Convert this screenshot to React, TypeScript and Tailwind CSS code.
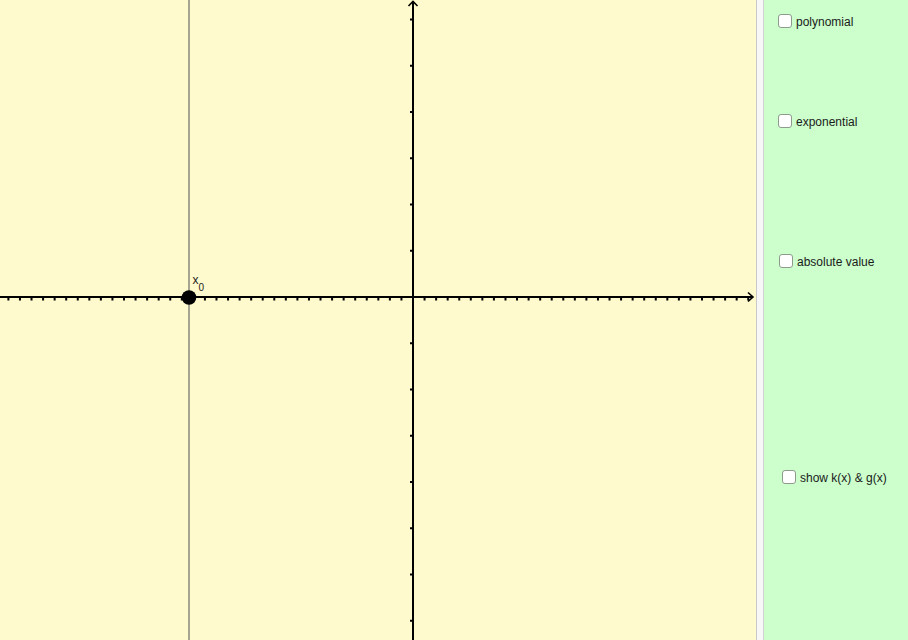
import React from 'react'

const ORIGIN_X = 413
const ORIGIN_Y = 297
const STEP_X = 11.56
const STEP_Y = 46.25

function Graph() {
  const xTicks: number[] = []
  for (let k = -35; k <= 29; k++) if (k !== 0) xTicks.push(ORIGIN_X + k * STEP_X)
  const yTicks: number[] = []
  for (let k = -6; k <= 7; k++) if (k !== 0) yTicks.push(ORIGIN_Y + k * STEP_Y)

  return (
    <svg width={756} height={640} viewBox="0 0 756 640" className="block">
      {/* x = x0 line */}
      <line x1={189} y1={0} x2={189} y2={640} stroke="#7f7f78" strokeWidth={1.4} />

      {/* x axis */}
      <line x1={0} y1={ORIGIN_Y} x2={753} y2={ORIGIN_Y} stroke="#000" strokeWidth={2} />
      {xTicks.map((x) => (
        <rect key={x} x={x - 1} y={298} width={2} height={2.5} fill="#000" />
      ))}
      <polyline points="748,292.5 753,297 748,301.5" fill="none" stroke="#000" strokeWidth={1.6} />

      {/* y axis */}
      <line x1={ORIGIN_X} y1={1} x2={ORIGIN_X} y2={640} stroke="#000" strokeWidth={2} />
      {yTicks.map((y) => (
        <rect key={y} x={410} y={y - 1} width={2.5} height={2} fill="#000" />
      ))}
      <polyline points="408.5,6 413,1.5 417.5,6" fill="none" stroke="#000" strokeWidth={1.6} />

      {/* point x0 */}
      <circle cx={189} cy={297.5} r={7.3} fill="#000" />
      <text x={192.5} y={284} fontSize={12} fill="#222" fontFamily="'Liberation Sans', Arial, sans-serif">
        x
      </text>
      <text x={198.5} y={290.5} fontSize={10} fill="#222" fontFamily="'Liberation Sans', Arial, sans-serif">
        0
      </text>
    </svg>
  )
}

function Check({ label, className }: { label: string; className: string }) {
  return (
    <label className={`flex items-center gap-1 h-[14px] ${className}`}>
      <span className="w-[14px] h-[14px] rounded-[3px] border-[1.5px] border-[#8d9b8d] bg-white shrink-0" />
      <span className="text-[12px] leading-none text-[#1a1a1a] pt-px">{label}</span>
    </label>
  )
}

export default function App() {
  return (
    <div className="flex h-[640px] w-[908px] overflow-hidden font-['Liberation_Sans',Arial,sans-serif]">
      <div className="w-[756px] h-full bg-[#fffacd] shrink-0">
        <Graph />
      </div>
      <div className="w-px h-full bg-[#c9c9c9] shrink-0" />
      <div className="w-[6px] h-full bg-[#f7f7f7] shrink-0" />
      <div className="w-px h-full bg-[#d2d2d2] shrink-0" />
      <div className="flex-1 h-full bg-[#ccffcc] flex flex-col items-start">
        <Check label="polynomial" className="mt-[14px] ml-[14px]" />
        <Check label="exponential" className="mt-[86px] ml-[14px]" />
        <Check label="absolute value" className="mt-[126px] ml-[15px]" />
        <Check label="show k(x) & g(x)" className="mt-[202px] ml-[18px]" />
      </div>
    </div>
  )
}
